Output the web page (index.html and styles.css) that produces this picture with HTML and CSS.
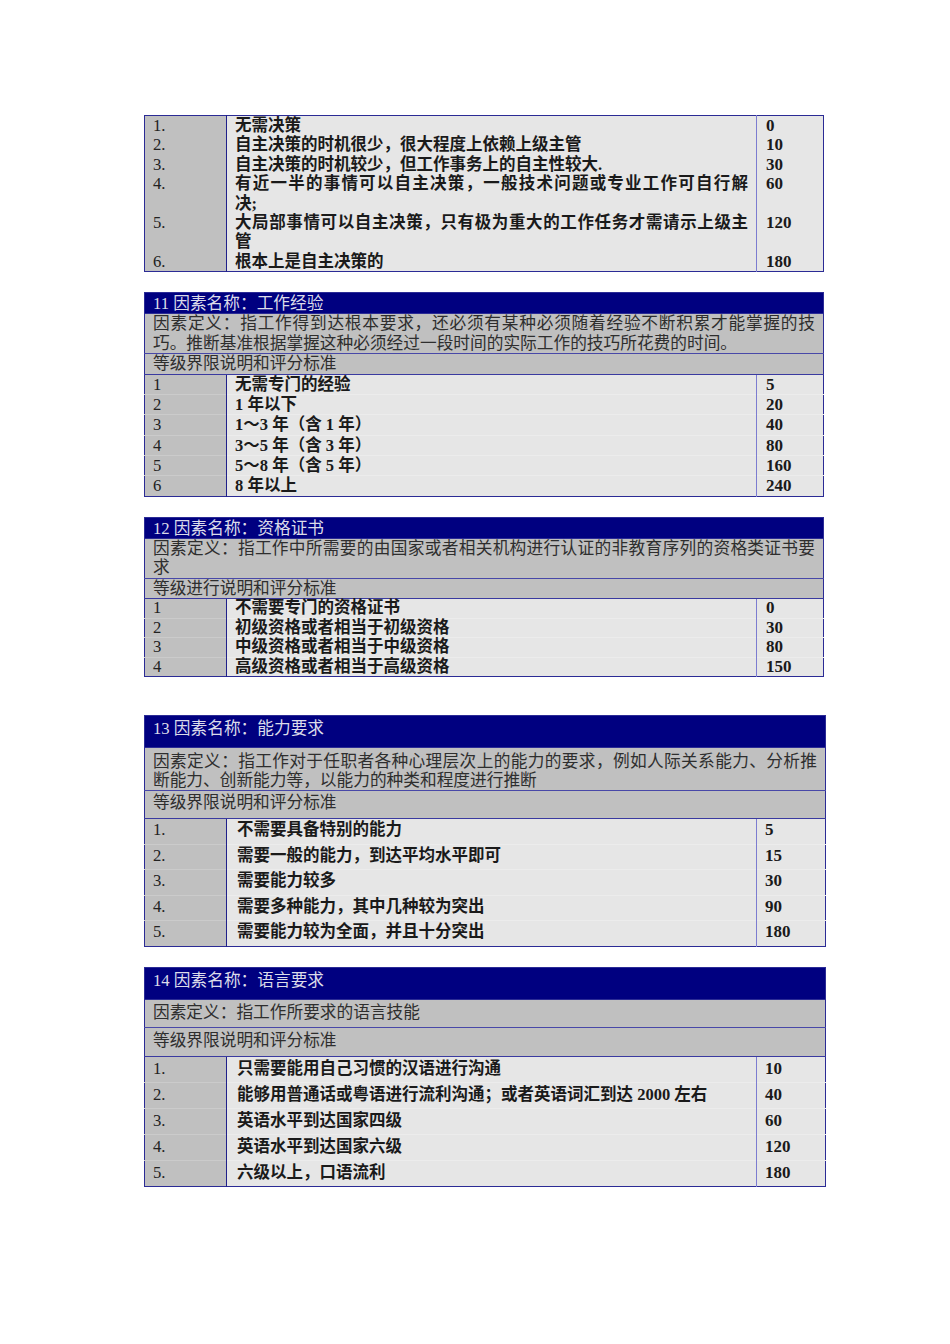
FILE: index.html
```html
<!DOCTYPE html>
<html lang="zh">
<head>
<meta charset="utf-8">
<title>因素评分标准</title>
<link rel="stylesheet" href="styles.css">
</head>
<body>
<main class="page">

<table class="ft t1">
  <colgroup><col class="c1"><col class="c2"><col class="c3"></colgroup>
  <tbody>
    <tr class="lv first"><td class="no">1.</td><td class="tx">无需决策</td><td class="sc">0</td></tr>
    <tr class="lv"><td class="no">2.</td><td class="tx">自主决策的时机很少，很大程度上依赖上级主管</td><td class="sc">10</td></tr>
    <tr class="lv"><td class="no">3.</td><td class="tx">自主决策的时机较少，但工作事务上的自主性较大.</td><td class="sc">30</td></tr>
    <tr class="lv"><td class="no">4.</td><td class="tx"><span class="jl">有近一半的事情可以自主决策，一般技术问题或专业工作可自行解</span>决;</td><td class="sc">60</td></tr>
    <tr class="lv"><td class="no">5.</td><td class="tx"><span class="jl">大局部事情可以自主决策，只有极为重大的工作任务才需请示上级主</span>管</td><td class="sc">120</td></tr>
    <tr class="lv"><td class="no">6.</td><td class="tx tb">根本上是自主决策的</td><td class="sc tb">180</td></tr>
  </tbody>
</table>

<table class="ft t11">
  <colgroup><col class="c1"><col class="c2"><col class="c3"></colgroup>
  <tbody>
    <tr class="hd"><td colspan="3">11 因素名称：工作经验</td></tr>
    <tr class="df"><td colspan="3"><span class="jl">因素定义：指工作得到达根本要求，还必须有某种必须随着经验不断积累才能掌握的技</span>巧。推断基准根据掌握这种必须经过一段时间的实际工作的技巧所花费的时间。</td></tr>
    <tr class="gr"><td colspan="3">等级界限说明和评分标准</td></tr>
    <tr class="lv first"><td class="no">1</td><td class="tx">无需专门的经验</td><td class="sc">5</td></tr>
    <tr class="lv"><td class="no">2</td><td class="tx">1 年以下</td><td class="sc">20</td></tr>
    <tr class="lv"><td class="no">3</td><td class="tx">1～3 年（含 1 年）</td><td class="sc">40</td></tr>
    <tr class="lv"><td class="no">4</td><td class="tx">3～5 年（含 3 年）</td><td class="sc">80</td></tr>
    <tr class="lv"><td class="no">5</td><td class="tx">5～8 年（含 5 年）</td><td class="sc">160</td></tr>
    <tr class="lv"><td class="no">6</td><td class="tx">8 年以上</td><td class="sc">240</td></tr>
  </tbody>
</table>

<table class="ft t12">
  <colgroup><col class="c1"><col class="c2"><col class="c3"></colgroup>
  <tbody>
    <tr class="hd"><td colspan="3">12 因素名称：资格证书</td></tr>
    <tr class="df"><td colspan="3"><span class="jl">因素定义：指工作中所需要的由国家或者相关机构进行认证的非教育序列的资格类证书要</span>求</td></tr>
    <tr class="gr"><td colspan="3">等级进行说明和评分标准</td></tr>
    <tr class="lv first"><td class="no">1</td><td class="tx">不需要专门的资格证书</td><td class="sc">0</td></tr>
    <tr class="lv"><td class="no">2</td><td class="tx">初级资格或者相当于初级资格</td><td class="sc">30</td></tr>
    <tr class="lv"><td class="no">3</td><td class="tx">中级资格或者相当于中级资格</td><td class="sc">80</td></tr>
    <tr class="lv"><td class="no">4</td><td class="tx">高级资格或者相当于高级资格</td><td class="sc">150</td></tr>
  </tbody>
</table>

<table class="ft wide t13">
  <colgroup><col class="c1"><col class="c2"><col class="c3"></colgroup>
  <tbody>
    <tr class="hd"><td colspan="3">13 因素名称：能力要求</td></tr>
    <tr class="df"><td colspan="3"><span class="jl">因素定义：指工作对于任职者各种心理层次上的能力的要求，例如人际关系能力、分析推</span>断能力、创新能力等，以能力的种类和程度进行推断</td></tr>
    <tr class="gr"><td colspan="3">等级界限说明和评分标准</td></tr>
    <tr class="lv first"><td class="no">1.</td><td class="tx">不需要具备特别的能力</td><td class="sc">5</td></tr>
    <tr class="lv"><td class="no">2.</td><td class="tx">需要一般的能力，到达平均水平即可</td><td class="sc">15</td></tr>
    <tr class="lv"><td class="no">3.</td><td class="tx">需要能力较多</td><td class="sc">30</td></tr>
    <tr class="lv"><td class="no">4.</td><td class="tx">需要多种能力，其中几种较为突出</td><td class="sc">90</td></tr>
    <tr class="lv"><td class="no">5.</td><td class="tx">需要能力较为全面，并且十分突出</td><td class="sc">180</td></tr>
  </tbody>
</table>

<table class="ft wide t14">
  <colgroup><col class="c1"><col class="c2"><col class="c3"></colgroup>
  <tbody>
    <tr class="hd"><td colspan="3">14 因素名称：语言要求</td></tr>
    <tr class="df"><td colspan="3">因素定义：指工作所要求的语言技能</td></tr>
    <tr class="gr"><td colspan="3">等级界限说明和评分标准</td></tr>
    <tr class="lv first"><td class="no">1.</td><td class="tx">只需要能用自己习惯的汉语进行沟通</td><td class="sc">10</td></tr>
    <tr class="lv"><td class="no">2.</td><td class="tx">能够用普通话或粤语进行流利沟通；或者英语词汇到达 2000 左右</td><td class="sc">40</td></tr>
    <tr class="lv"><td class="no">3.</td><td class="tx">英语水平到达国家四级</td><td class="sc">60</td></tr>
    <tr class="lv"><td class="no">4.</td><td class="tx">英语水平到达国家六级</td><td class="sc">120</td></tr>
    <tr class="lv"><td class="no">5.</td><td class="tx">六级以上，口语流利</td><td class="sc">180</td></tr>
  </tbody>
</table>

</main>
</body>
</html>
```

FILE: styles.css
```css
html, body {
  margin: 0;
  padding: 0;
  background: #ffffff;
}

.page {
  width: 950px;
  padding: 115px 0 100px 144px;
  box-sizing: border-box;
  display: flex;
  flex-direction: column;
  align-items: flex-start;
}

.ft {
  width: 680px;
  table-layout: fixed;
  border-collapse: collapse;
  border: 1px solid #2b2b95;
  font-family: "Liberation Serif", "Noto Sans CJK SC", serif;
  font-size: 16.7px;
  color: #1a1a1a;
  margin-bottom: 20px;
}

.ft.wide { width: 682px; }

.t12 { margin-bottom: 38px; }

.ft col.c1 { width: 82px; }
.ft col.c3 { width: 67px; }
.ft.wide col.c3 { width: 69px; }

.ft td {
  padding: 0 8px;
  line-height: 19.5px;
  vertical-align: top;
}

/* header bar */
.hd td {
  background: #000080;
  color: #dcdcea;
  height: 19px;
  line-height: 19px;
  padding-top: 1px;
  border-bottom: 1px solid #2b2b95;
}

/* definition row */
.df td {
  background: #c0c0c0;
  color: #2e2e2e;
  text-align: justify;
  border-bottom: 1px solid #4848a8;
}

/* grading row */
.gr td {
  background: #c0c0c0;
  color: #2e2e2e;
  border-bottom: 1px solid #3a3aa0;
}

.jl {
  display: block;
  text-align: justify;
  text-align-last: justify;
}

/* level rows */
.lv td {
  background: #e6e6e6;
  border-top: 1px solid #ececec;
}
.lv.first td { border-top: none; }

.lv td.no {
  background: #c0c0c0;
  border-top-color: #cbcbcb;
  border-right: 1px solid #20208a;
  color: #222222;
}

.lv td.tx {
  font-size: 16.5px;
  font-weight: bold;
  text-align: justify;
  border-right: 1px solid #7c7cd0;
}

.lv td.sc {
  font-size: 17px;
  font-weight: bold;
  padding-left: 9px;
}

.t1 .lv td { border-top: none; line-height: 19.4px; }
.t1 .lv td.no { border-top: none; }
.t1 .lv.first td { padding-top: 1px; line-height: 18.4px; }

.t11 .lv td { line-height: 19.3px; }

.t12 .lv td { line-height: 18.5px; }

/* tables 13 & 14: roomier rows */
.t13 .hd td,
.t14 .hd td {
  height: 28px;
  padding-top: 3px;
  line-height: 20px;
}

.t13 .df td { padding-top: 4px; line-height: 19px; height: 37px; }
.t13 .gr td { height: 25px; padding-top: 2px; line-height: 20px; }

.t14 .df td { height: 24px; padding-top: 3px; line-height: 20px; }
.t14 .gr td { height: 25px; padding-top: 3px; line-height: 20px; }

.t13 .lv td,
.t14 .lv td {
  height: 25.6px;
  box-sizing: border-box;
  padding-top: 1px;
  line-height: 20px;
}
.t14 .lv td { height: 26px; padding-top: 2px; }

.t13 .lv td.tx,
.t14 .lv td.tx { padding-left: 10px; }
.t13 .lv td.sc,
.t14 .lv td.sc { padding-left: 8px; }
```
